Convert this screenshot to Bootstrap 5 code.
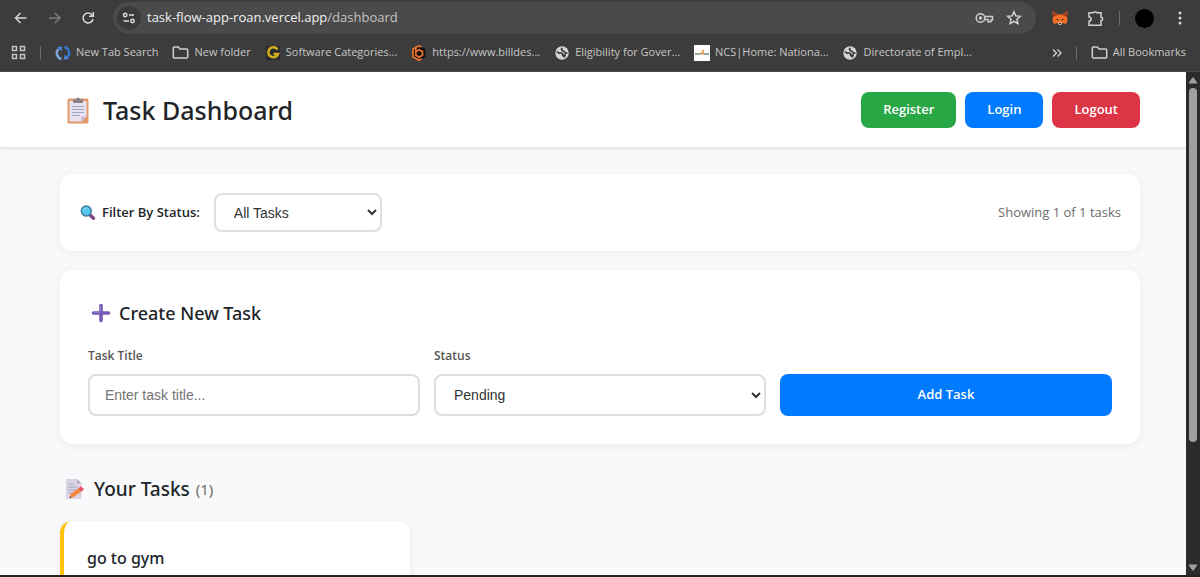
<!DOCTYPE html>
<html lang="en">
<head>
<meta charset="utf-8">
<meta name="viewport" content="width=device-width, initial-scale=1">
<title>Task Dashboard</title>
<link href="https://cdn.jsdelivr.net/npm/bootstrap@5.3.0/dist/css/bootstrap.min.css" rel="stylesheet">
<style>
  body { font-family: "Open Sans", "Noto Sans", sans-serif; background: #2b2b2b; color: #212529; }
  h1, h2, h3 { font-family: "Noto Sans", sans-serif; }
  svg { display: block; flex: none; }
  .browser-bar { background: #3c3c3c; color: #c7c7c7; border-bottom: 1px solid #4a4a4a; }
  .browser-bar button, .browser-bar a { background: none; border: 0; padding: 0; color: inherit; text-decoration: none; }
  .tool-row { height: 36px; padding: 2px 18px 2px 12px; }
  .tool-item { margin-left: 15px; }
  .address { background: #4a4a4a; height: 32px; border-radius: 16px; padding: 0 14px 0 4px; margin-left: 16px; }
  .site-info { width: 24px; height: 24px; border-radius: 50%; background: #3a3a3a !important; }
  .url { font-size: 13px; color: #c4c4c4; margin-left: 6px; }
  .url b { font-weight: 400; color: #f1f1f1; }
  .avatar { width: 19px; height: 19px; border-radius: 50%; background: #000 !important; }
  .rule { width: 1px; height: 14px; background: #6b6b6b; }
  .bookmarks { height: 35px; padding: 0 14px 2px 11px; font-size: 11px; white-space: nowrap; }
  .bookmarks .bar-group { gap: 14px; }
  .bookmarks a { display: flex; align-items: center; gap: 5px; }
  .page-view { background: #f8f9fa; overflow: hidden; }
  .page-head { background: #fff; height: 75px; padding: 0 46px 0 60px; box-shadow: 0 1px 4px rgba(0,0,0,.16); }
  .page-head h1 { font-size: 25px; font-weight: 500; gap: 11px; padding-left: 4px; }
  .head-actions { gap: 9px; }
  .act { height: 36px; border: 0; border-radius: 8px; color: #fff; font-size: 13px; font-weight: 600; padding: 0 22px; }
  .act-green { background: #28a745; }
  .act-blue { background: #007bff; }
  .act-red { background: #dc3545; }
  .page-main { padding: 27px 46px 0 60px; }
  .panel { background: #fff; border-radius: 12px; box-shadow: 0 2px 8px rgba(0,0,0,.06); }
  .filter-panel { height: 77px; padding: 0 19px 0 20px; margin-bottom: 19px; font-size: 13px; }
  .filter-panel label { font-weight: 600; gap: 6px; margin-right: 14px; }
  .shown { color: #6c6c6c; }
  .field { display: block; border: 2px solid #dedede; border-radius: 8px; background: #fff; font-family: "Liberation Sans", Arial, sans-serif; font-size: 14px; color: #333; width: 100%; height: 42px; padding: 0 15px; }
  .field::placeholder { color: #757575; }
  select.field { padding: 0 0 0 14px; }
  .filter-panel .field { width: 168px; height: 39px; }
  .create-panel { padding: 31px 28px 28px; margin-bottom: 32px; }
  .create-panel h2 { font-size: 18px; line-height: 24px; font-weight: 500; gap: 8px; padding-left: 3px; margin-bottom: 21px; }
  .form-cols { display: grid; grid-template-columns: repeat(3, 1fr); gap: 14px; }
  .form-cols label { display: block; font-size: 12px; line-height: 20px; font-weight: 600; color: #555; margin-bottom: 8px; }
  .form-cols .act { height: 42px; font-size: 13px; }
  .list-title { font-size: 19px; line-height: 26px; font-weight: 500; gap: 9px; padding-left: 5px; margin-bottom: 19px; }
  .list-title span { font-size: 15px; font-weight: 400; color: #6c6c6c; margin-left: -3px; }
  .task-grid { display: grid; grid-template-columns: repeat(3, 1fr); gap: 15px; }
  .task { border-left: 4px solid #ffc107; padding: 26px 23px 80px; }
  .task h3 { font-size: 16px; line-height: 22px; font-weight: 500; margin: 0; }
  .scroll-rail { width: 14px; background: #2b2b2b; padding: 5px 0 4px; }
  .scroll-thumb { width: 8px; border-radius: 4px; background: #9f9f9f; }
  .window-edge { height: 2px; background: #252525; }
</style>
</head>
<body class="vh-100 overflow-hidden d-flex flex-column">

<svg class="d-none">
  <symbol id="globe" viewBox="0 0 16 16"><circle cx="8" cy="8" r="6.700" fill="#d2d4d7"/><path d="M3 6.500q1.500 2 3.500 1.500t2 1.500 1.800.5-.3 2.500M8.500 3Q6.500 4.500 8.500 5.500T11 7.500t2.500.3" fill="none" stroke="#3c3c3c" stroke-width="1.700"/></symbol>
  <symbol id="folder" viewBox="0 0 16 14"><path d="M1.700 1h4.200l1.600 2h6.800q.9 0 .9.900v7.200q0 .9-.9.900H1.700q-.9 0-.9-.9V1.900q0-.9.900-.9z" fill="none" stroke="#cfcfcf" stroke-width="1.500"/></symbol>
</svg>

<header class="browser-bar">
  <div class="tool-row d-flex align-items-center">
    <button aria-label="Back"><svg width="17" height="16" viewBox="0 0 17 16" fill="none" stroke="#d6d6d6" stroke-width="1.500"><path d="M14.500 8H4M8.500 3 3.500 8l5 5"/></svg></button>
    <button aria-label="Forward" class="ms-3"><svg width="18" height="16" viewBox="0 0 18 16" fill="none" stroke="#7d7d7d" stroke-width="1.500"><path d="M4 8h10.500M10 3l5 5-5 5"/></svg></button>
    <button aria-label="Reload" class="ms-3"><svg width="18" height="16" viewBox="0 0 18 16" fill="none" stroke="#d6d6d6" stroke-width="1.600"><path d="M14 9a5 5 0 1 1-1.300-4.500L14 6M14.300 2v4.300h-4.300"/></svg></button>
    <div class="address d-flex align-items-center flex-grow-1">
      <button class="site-info d-flex align-items-center justify-content-center" aria-label="Site information"><svg width="14" height="12" viewBox="0 0 14 12" fill="none" stroke="#e0e0e0" stroke-width="1.400"><circle cx="3.200" cy="3" r="1.700"/><path d="M7 3h5M1.500 9H7"/><circle cx="10.500" cy="9" r="1.700"/></svg></button>
      <div class="url flex-grow-1"><b>task-flow-app-roan.vercel.app</b>/dashboard</div>
      <button aria-label="Passwords"><svg width="19" height="14" viewBox="0 0 19 14" fill="none" stroke="#cfcfcf" stroke-width="1.500"><circle cx="5.500" cy="7" r="4.300"/><circle cx="5.500" cy="7" r="1" fill="#cfcfcf"/><path d="M9.500 5.500H17.500V9h-1.500v1.800h-3V8.500H9.600"/></svg></button>
      <button class="ms-2 ps-1" aria-label="Bookmark this page"><svg width="16" height="16" viewBox="0 0 16 16" fill="none" stroke="#d6d6d6" stroke-width="1.400"><path d="m8 1.800 1.800 4.100 4.500.4-3.400 2.900 1 4.400L8 11.300l-3.900 2.300 1-4.400L1.700 6.300l4.500-.4z"/></svg></button>
    </div>
    <button class="tool-item" aria-label="Wallet"><svg width="18" height="16" viewBox="0 0 18 16"><path d="M1.500 1 7 4.500h4L16.500 1l-.5 6 .5 3-1.300 4-3.700-1L10 15H8l-1.500-2-3.700 1-1.300-4L2 7z" fill="#f27027"/><path d="M1.500 1 7 5 2.200 7zM16.500 1 11 5l4.800 2z" fill="#a33a18"/><path d="m4.500 8.500 3 1-.5 1.200zM13.500 8.500l-3 1 .5 1.200z" fill="#30201c"/><path d="M7 12.500h4L10 15H8z" fill="#e5ddd8"/><path d="M8 13h2v1.300H8z" fill="#30201c"/></svg></button>
    <button class="tool-item ps-1" aria-label="Extensions"><svg width="16" height="17" viewBox="0 0 16 17" fill="none" stroke="#d0d0d0" stroke-width="1.500"><path d="M1 2.800h4.500a1.700 1.500 0 0 1 3.300 0H13v4.400a1.700 1.700 0 0 1 0 3.400v4.600H1v-4a2.100 2.100 0 0 0 0-4.200z"/></svg></button>
    <span class="rule tool-item"></span>
    <button class="avatar tool-item" aria-label="Profile"></button>
    <button class="ms-4" aria-label="Menu"><svg width="4" height="16" viewBox="0 0 4 16" fill="#d6d6d6"><circle cx="2" cy="3" r="1.500"/><circle cx="2" cy="8" r="1.500"/><circle cx="2" cy="13" r="1.500"/></svg></button>
  </div>
  <nav class="bookmarks d-flex align-items-center justify-content-between" aria-label="Bookmarks">
    <div class="bar-group d-flex align-items-center">
      <button aria-label="Apps"><svg width="15" height="15" viewBox="0 0 15 15" fill="none" stroke="#c4c4c4" stroke-width="1.500"><path d="M1.500 1.500h4v4h-4zM9.500 1.500h4v4h-4zM1.500 9.500h4v4h-4zM9.500 9.500h4v4h-4z"/></svg></button>
      <span class="rule"></span>
      <a href="#"><svg width="16" height="16" viewBox="0 0 16 16" fill="none" stroke-width="2.400"><path d="M6.500 14A6 6 0 0 1 3.500 4" stroke="#7ea6e0"/><path d="M9.500 2a6 6 0 0 1 3 10" stroke="#3778d3"/><path d="m2 2 5-.5-.5 5zM14 14l-5 .5.500-5z" fill="#4a89e2"/></svg>New Tab Search</a>
      <a href="#"><svg width="17" height="14"><use href="#folder"/></svg>New folder</a>
      <a href="#"><svg width="16" height="16" viewBox="0 0 16 16"><path d="M1 1h14v14H1z" fill="#292a2c"/><path d="M12.500 4.500A5 5 0 1 0 13 9H8.500" fill="none" stroke="#d3ac22" stroke-width="2.600"/></svg>Software Categories...</a>
      <a href="#"><svg width="16" height="16" viewBox="0 0 16 16"><path d="M8 .5 14.500 4v8L8 15.500 1.500 12V4z" fill="#17110d"/><path d="M10.500 2 8 .8 2 4v8l6 3.200 2.500-1.400M4.800 2.500v7.700L8 12.300l3.500-2V6.500L8 4.800 5 6.500" fill="none" stroke="#ed742f" stroke-width="1.700"/></svg>https://www.billdes...</a>
      <a href="#"><svg width="16" height="16"><use href="#globe"/></svg>Eligibility for Gover...</a>
      <a href="#"><svg width="16" height="16" viewBox="0 0 16 16"><path d="M0 0h16v16H0z" fill="#fff"/><path d="M1 9h5m4 0h5" stroke="#92a999" stroke-width="2"/><path d="M6 8.500h4" stroke="#d98f55" stroke-width="2"/><circle cx="9" cy="6" r="1.300" fill="#eda657"/></svg>NCS|Home: Nationa...</a>
      <a href="#"><svg width="16" height="16"><use href="#globe"/></svg>Directorate of Empl...</a>
    </div>
    <div class="bar-group d-flex align-items-center">
      <button aria-label="More bookmarks"><svg width="10" height="10" viewBox="0 0 10 10" fill="none" stroke="#d0d0d0" stroke-width="1.400"><path d="m1 1.500 3.500 3.500L1 8.500M5.500 1.500 9 5 5.500 8.500"/></svg></button>
      <span class="rule"></span>
      <a href="#"><svg width="17" height="14"><use href="#folder"/></svg>All Bookmarks</a>
    </div>
  </nav>
</header>

<div class="d-flex flex-grow-1 overflow-hidden">
  <div class="page-view flex-grow-1">
    <header class="page-head d-flex align-items-center justify-content-between">
      <h1 class="d-flex align-items-center m-0"><svg width="28" height="28" viewBox="0 0 28 28"><rect x="3.500" y="2.500" width="21" height="25" rx="1.500" fill="#e39a68"/><path d="M5.500 5h17v15.500l-5 5h-12z" fill="#e9e1f1"/><path d="M17.500 25.500v-5h5z" fill="#c3b5d1"/><path d="M9 6V3.500h3a2 2 0 0 1 4 0h3V6q0 1-1 1h-8q-1 0-1-1z" fill="#887f8b"/><path d="M8 10.500h12M8 13.500h12M8 16.500h12M8 19.500h8" stroke="#9caac2" stroke-width="1.200"/></svg>Task Dashboard</h1>
      <div class="head-actions d-flex">
        <button class="act act-green">Register</button>
        <button class="act act-blue">Login</button>
        <button class="act act-red">Logout</button>
      </div>
    </header>
    <main class="page-main">
      <section class="panel filter-panel d-flex align-items-center justify-content-between">
        <div class="d-flex align-items-center">
          <label for="filter" class="d-flex align-items-center"><svg width="16" height="16" viewBox="0 0 16 16"><path d="m9.500 9.500 4 3.800" stroke="#824580" stroke-width="3.400" stroke-linecap="round"/><circle cx="6.300" cy="6" r="5" fill="#55c8ec" stroke="#39769c" stroke-width="1.300"/><path d="M3.500 5a3 3 0 0 1 3-2" fill="none" stroke="#a5e8fa"/></svg>Filter By Status:</label>
          <select id="filter" class="field"><option>All Tasks</option><option>Pending</option><option>Completed</option></select>
        </div>
        <span class="shown">Showing 1 of 1 tasks</span>
      </section>
      <section class="panel create-panel">
        <h2 class="d-flex align-items-center"><svg width="20" height="20" viewBox="0 0 20 20"><path d="M10 2.500v15M2.500 10h15" stroke="#7559b5" stroke-width="3.600" stroke-linecap="round"/><path d="M9.500 3v5.500M3 9.300h6" stroke="#9482c8"/></svg>Create New Task</h2>
        <form class="form-cols align-items-end">
          <div><label for="title">Task Title</label><input id="title" type="text" class="field" placeholder="Enter task title..."></div>
          <div><label for="status">Status</label><select id="status" class="field"><option>Pending</option><option>Completed</option></select></div>
          <button type="button" class="act act-blue">Add Task</button>
        </form>
      </section>
      <h2 class="list-title d-flex align-items-center"><svg width="20" height="22" viewBox="0 0 20 22"><path d="M1 1h11l4.500 4.500V21H1z" fill="#ddd3e5"/><path d="M12 1v4.500h4.500z" fill="#b8a8c5"/><path d="M3.500 6h6M3.500 9h9M3.500 12h8M3.500 15h5" stroke="#9cacc4"/><path d="m4.500 20 1.500-4.500 8-5.500 2.500 3.500-8 5.500z" fill="#f48a42"/><path d="m13.500 10.300 2.500-2 3 3-2.600 2.200z" fill="#e95168"/><path d="m4.500 20 .7-2 1.500 1.400z" fill="#594556"/></svg>Your Tasks <span>(1)</span></h2>
      <div class="task-grid">
        <article class="panel task"><h3>go to gym</h3></article>
      </div>
    </main>
  </div>
  <div class="scroll-rail d-flex flex-column align-items-center" aria-hidden="true">
    <svg width="10" height="7" viewBox="0 0 10 7"><path d="M5 .5 9 6H1z" fill="#9f9f9f" stroke="#9f9f9f" stroke-linejoin="round"/></svg>
    <div class="flex-grow-1 d-flex flex-column my-1"><div class="scroll-thumb h-75"></div></div>
    <svg width="10" height="7" viewBox="0 0 10 7"><path d="M5 6.500 9 1H1z" fill="#9f9f9f" stroke="#9f9f9f" stroke-linejoin="round"/></svg>
  </div>
</div>
<div class="window-edge"></div>
<script src="https://cdn.jsdelivr.net/npm/bootstrap@5.3.0/dist/js/bootstrap.bundle.min.js"></script>
</body>
</html>
